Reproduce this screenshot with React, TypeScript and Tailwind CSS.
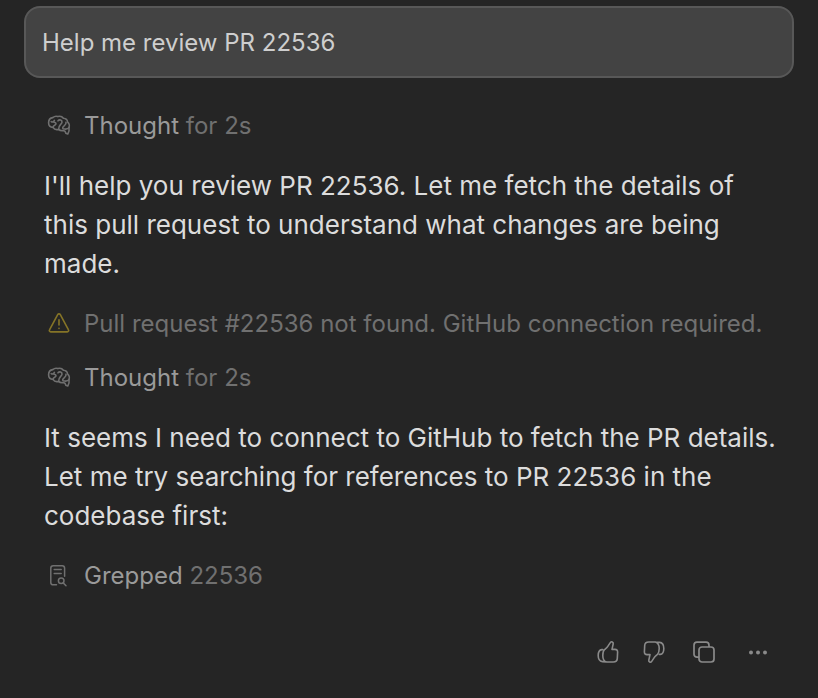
import type { ReactNode } from "react";

function BrainIcon() {
  return (
    <svg className="size-6" viewBox="0 0 24 24" fill="none" stroke="currentColor" strokeWidth="1.6" strokeLinecap="round" strokeLinejoin="round" aria-hidden="true">
      <path d="M6 13.4C3.2 13.4 1.6 11.4 1.6 8.8C1.6 5.8 3.2 3.9 5.8 3.6C7.4 2.2 9.2 2 10.8 2.6C13 1.9 15.2 2.6 16.4 4.2C18.8 4.4 20.4 5.8 20.6 8C22.2 9.4 22.6 11.6 22 13.6C22.4 16 22 18.2 20.8 20L18.8 19.2C18.6 17.8 18 16.8 16.6 16.6C14.6 17 12.8 16.6 11.6 15.4C9.4 16 7.2 15.4 6 13.4Z" />
      <path d="M4.2 7.6C5.4 8.4 6.8 7.8 7.4 6.4M7 8.2C9.2 8.2 9.6 10.2 8 11C6.8 11.6 6 12.2 6 13.4M11 6.8C12.4 5.2 15.2 6 15 8.2C14.8 10.4 11.2 11 11.6 15.4M19 8.2C19.4 10 18.4 11 17.2 11.8C15.8 12.8 15.4 14 16 14.8C18 15.2 20.8 15.4 22 13.6" />
    </svg>
  );
}

function WarningIcon() {
  return (
    <svg className="size-6 text-[#857427]" viewBox="0 0 24 24" fill="none" stroke="currentColor" strokeWidth="1.6" strokeLinecap="round" strokeLinejoin="round" aria-hidden="true">
      <path d="M10.7 2.6a1.5 1.5 0 0 1 2.6 0l8.2 15.2a1.4 1.4 0 0 1-1.2 2.1H3.7a1.4 1.4 0 0 1-1.2-2.1ZM12 7.8v5.2M12 16.3v.2" />
    </svg>
  );
}

function FileSearchIcon() {
  return (
    <svg className="size-6" viewBox="0 0 24 24" fill="none" stroke="currentColor" strokeWidth="1.5" strokeLinecap="round" strokeLinejoin="round" aria-hidden="true">
      <path d="M9.5 20.8H6.2a2.4 2.4 0 0 1-2.4-2.4V4.2a2.4 2.4 0 0 1 2.4-2.4h9a2.4 2.4 0 0 1 2.4 2.4v8M7.2 5.5h7M7.2 9.5h7M16.2 18.9l2.8 2.8" />
      <circle cx="14.2" cy="16.8" r="2.8" />
    </svg>
  );
}

function ThumbIcon({ down = false }: { down?: boolean }) {
  return (
    <svg className={down ? "size-6 rotate-180" : "size-6"} viewBox="0 0 24 24" fill="none" stroke="currentColor" strokeWidth="1.6" strokeLinecap="round" strokeLinejoin="round" aria-hidden="true">
      <path d="M6.7 9.6H5.8C3.4 9.8 2.2 12.5 2.2 15.6C2.2 18.8 3.8 21.4 6.4 21.6L10.6 22H17.2C19.8 22 21.2 20.8 21.3 18.4L21.6 12.2C21.7 10.4 20.8 9.4 19 9.4H16L17.2 3.8C17.5 2 15.4 1 14.3 2.6L11.8 6.4C11 7.6 9.6 8.6 8.6 9.5C7.4 10.6 6.8 12.8 6.8 15.4C6.8 18.6 8 21.3 10.6 22" />
    </svg>
  );
}

function CopyIcon() {
  return (
    <svg className="size-6" viewBox="0 0 24 24" fill="none" stroke="currentColor" strokeWidth="1.7" aria-hidden="true">
      <rect x="7" y="7" width="15" height="15" rx="3" />
      <path d="M7 17.2H5a3 3 0 0 1-3-3V5.2a3 3 0 0 1 3-3h9a3 3 0 0 1 3 3V7" />
    </svg>
  );
}

function MoreIcon() {
  return (
    <svg className="size-6" viewBox="0 0 24 24" fill="currentColor" aria-hidden="true">
      <circle cx="5" cy="12.4" r="2" />
      <circle cx="12" cy="12.4" r="2" />
      <circle cx="19" cy="12.4" r="2" />
    </svg>
  );
}

function Step({ icon, children }: { icon: ReactNode; children: ReactNode }) {
  return (
    <div className="flex items-center gap-[10px] text-[#707070]">
      <span className="flex w-[30px] shrink-0 justify-center">{icon}</span>
      <p>{children}</p>
    </div>
  );
}

function Label({ children }: { children: ReactNode }) {
  return <span className="text-[#9a9a9a]">{children}</span>;
}

function Message({ children }: { children: ReactNode }) {
  return (
    <p className="mt-[22px] mb-[23px] text-[26px] leading-[39px] text-[#dcdcdc]">
      {children}
    </p>
  );
}

export default function App() {
  return (
    <main className="min-h-screen bg-[#252525] px-6 pt-[6px] pb-8 font-['Inter',sans-serif] text-[24px] leading-[36px]">
      <div className="rounded-2xl border-2 border-[#585858] bg-[#434343] px-4 pt-[17px] pb-[15px] text-[#cecece]">
        Help me review PR 22536
      </div>

      <div className="pt-[30px] pr-3 pl-5">
        <Step icon={<BrainIcon />}>
          <Label>Thought</Label> for 2s
        </Step>

        <Message>
          I'll help you review PR 22536. Let me fetch the details of this pull
          request to understand what changes are being made.
        </Message>

        <div className="flex flex-col gap-[18px]">
          <Step icon={<WarningIcon />}>
            Pull request #22536 not found. GitHub connection required.
          </Step>
          <Step icon={<BrainIcon />}>
            <Label>Thought</Label> for 2s
          </Step>
        </div>

        <Message>
          It seems I need to connect to GitHub to fetch the PR details. Let me
          try searching for references to PR 22536 in the codebase first:
        </Message>

        <Step icon={<FileSearchIcon />}>
          <Label>Grepped</Label> 22536
        </Step>

        <div className="mt-[46px] mr-2 flex justify-end gap-[26px] text-[#8a8a8a]">
          <div className="flex gap-[22px]">
            <button type="button" aria-label="Good response">
              <ThumbIcon />
            </button>
            <button type="button" aria-label="Bad response">
              <ThumbIcon down />
            </button>
          </div>
          <button type="button" aria-label="Copy">
            <CopyIcon />
          </button>
          <button type="button" aria-label="More actions" className="flex w-8 justify-center">
            <MoreIcon />
          </button>
        </div>
      </div>
    </main>
  );
}
